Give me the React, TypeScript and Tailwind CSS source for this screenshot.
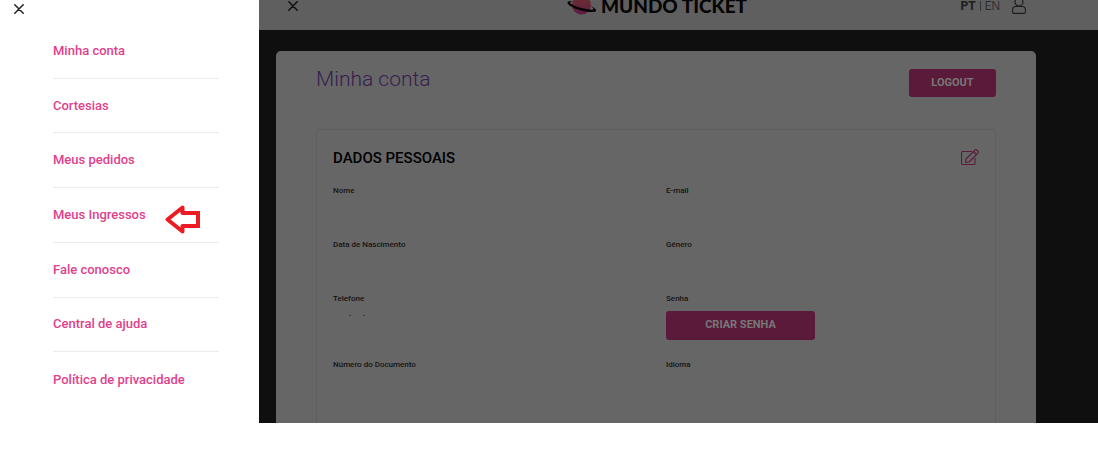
import type { ReactNode } from 'react'

const MENU = [
  { label: 'Minha conta', href: '#conta' },
  { label: 'Cortesias', href: '#cortesias' },
  { label: 'Meus pedidos', href: '#pedidos' },
  { label: 'Meus Ingressos', href: '#ingressos', marked: true },
  { label: 'Fale conosco', href: '#contato' },
  { label: 'Central de ajuda', href: '#ajuda' },
  { label: 'Política de privacidade', href: '#privacidade' },
]

function CloseIcon() {
  return (
    <svg className="block w-[10px] h-[10px]" viewBox="0 0 10 10" fill="none" stroke="currentColor" strokeWidth="1.5" strokeLinecap="round">
      <path d="M.8.8l8.4 8.4M9.2.8L.8 9.2" />
    </svg>
  )
}

function ArrowMark() {
  return (
    <svg className="absolute top-4 right-[18px] w-9 h-[31px]" viewBox="0 0 36 31" fill="none" stroke="#ed1c24" strokeWidth="4" strokeLinejoin="round">
      <path d="M2.500 15.500L17.500 3.500V9H33V22H17.500V27.500Z" />
      <path d="M32 7h3v3zM32 24h3v-3z" fill="#ed1c24" stroke="none" />
    </svg>
  )
}

function Planet() {
  return (
    <svg className="block w-[30px] h-[22px] shrink-0" viewBox="0 0 30 22">
      <defs>
        <linearGradient id="planet" x1="0" y1="0" x2="0" y2="1">
          <stop offset="0" stopColor="#6b3028" />
          <stop offset="0.5" stopColor="#66273a" />
          <stop offset="1" stopColor="#5b1a42" />
        </linearGradient>
      </defs>
      <circle cx="14.5" cy="10" r="9.5" fill="url(#planet)" />
      <path d="M6 6C1.500 5.500-.5 7 1 9c2.500 3 10 6.200 18 7.500 7 1.100 11.500.5 9.800-2-.8-1.200-2.800-2.400-5.300-3.500 1.800 1.300 3 2.300 2.800 3-.4 1.200-4.500.8-9.300-.4C9.500 11.900 3.500 9.300 3.200 7.700 3 6.800 4.500 6.400 6 6z" fill="#050505" />
    </svg>
  )
}

function UserIcon() {
  return (
    <svg className="block w-[14px] h-[18px]" viewBox="0 0 14 18" fill="none" stroke="currentColor" strokeWidth="1.1">
      <circle cx="7" cy="5" r="4" />
      <path d="M3.600 9.500h6.800c1.700 0 3 1.300 3 3v2.500c0 .8-.6 1.400-1.400 1.400H2c-.8 0-1.400-.6-1.400-1.400v-2.500c0-1.700 1.300-3 3-3z" />
    </svg>
  )
}

function EditIcon() {
  return (
    <svg className="block w-[18px] h-[18px]" viewBox="0 0 18 18" fill="none" stroke="currentColor" strokeWidth="1.1" strokeLinejoin="round">
      <path d="M11 2.500H1.500c-.6 0-1 .4-1 1v11c0 .6.400 1 1 1h11.500c.6 0 1-.4 1-1V9" />
      <path d="M4.500 13.500l.5-3.500 8.700-8.700c.7-.7 1.700-.7 2.400 0l.6.6c.7.7.7 1.700 0 2.400L8 13z" />
      <path d="M12.500 2.500l3 3" />
    </svg>
  )
}

function Field({ label, children }: { label: string; children?: ReactNode }) {
  return (
    <div className="pb-[19px]">
      <dt className="text-[8px] leading-[12px] font-medium text-[#141414]">{label}</dt>
      <dd className="mt-[6px] min-h-[17px]">{children}</dd>
    </div>
  )
}

function Sidebar() {
  return (
    <aside className="w-[259px] shrink-0 bg-white pb-4">
      <button type="button" aria-label="Fechar menu" className="block h-6 pl-[14px] pr-2 pb-[6px] text-[#222]">
        <CloseIcon />
      </button>
      <nav aria-label="Menu">
        <ul className="grid auto-rows-fr h-[383px] pl-[53px] pr-10">
          {MENU.map((item) => (
            <li key={item.label} className="relative flex items-center border-b border-[#ebebeb] last:border-b-0">
              <a href={item.href} className="text-[13px] leading-5 font-medium text-[#e0418c] whitespace-nowrap">
                {item.label}
              </a>
              {item.marked && <ArrowMark />}
            </li>
          ))}
        </ul>
      </nav>
    </aside>
  )
}

function TopBar() {
  return (
    <header className="h-[30px] bg-[#5f5f5f] pl-[29px] pr-[72px]">
      <div className="grid grid-cols-[1fr_auto_1fr] grid-rows-[12px] items-center">
        <button type="button" aria-label="Fechar" className="justify-self-start text-[#111]">
          <CloseIcon />
        </button>
        <div className="flex items-center gap-1 text-[19px] leading-3 font-black text-[#050505] whitespace-nowrap font-['Lato']">
          <Planet />
          MUNDO TICKET
        </div>
        <div className="flex items-center justify-self-end text-[12px] leading-3 text-[#1c1c1c]">
          <button type="button" className="font-bold">PT</button>
          <span className="mx-1 h-[10px] w-px bg-[#333]" />
          <button type="button" className="font-light">EN</button>
          <a href="#conta" aria-label="Minha conta" className="ml-3">
            <UserIcon />
          </a>
        </div>
      </div>
    </header>
  )
}

export default function App() {
  return (
    <div className="min-h-screen bg-white font-['Roboto',sans-serif]">
      <div className="flex overflow-hidden">
        <Sidebar />
        <div className="flex flex-col flex-1 min-w-0 bg-[#0f0f0f]">
          <TopBar />
          <main className="flex-1 pt-[21px] pl-[17px] pr-[62px]">
            <div className="h-full rounded-t-[5px] bg-[#666] px-10 pt-[18px]">
              <div className="flex items-start justify-between">
                <h1 className="text-[21px] leading-5 font-light text-[#36204e]">Minha conta</h1>
                <button type="button" className="h-7 w-[87px] rounded-[3px] bg-[#5b1a39] text-[11px] font-bold text-[#777]">
                  LOGOUT
                </button>
              </div>

              <section className="mt-8 rounded-t-[4px] border border-b-0 border-[#5e5e5e] px-4 pt-[18px] pb-[9px]">
                <div className="flex items-center justify-between h-5">
                  <h2 className="text-[15px] leading-5 font-medium text-black">DADOS PESSOAIS</h2>
                  <button type="button" aria-label="Editar dados" className="text-[#5b1a39]">
                    <EditIcon />
                  </button>
                </div>

                <dl className="mt-[17px] grid grid-cols-2 gap-x-5">
                  <Field label="Nome" />
                  <Field label="E-mail" />
                  <Field label="Data de Nascimento" />
                  <Field label="Gênero" />
                  <Field label="Telefone">
                    {/* masked number */}
                    <div className="flex gap-3 pt-1 pl-4">
                      <span className="h-px w-[2px] bg-[#3a3a3a]" />
                      <span className="h-px w-[2px] bg-[#3a3a3a]" />
                    </div>
                  </Field>
                  <Field label="Senha">
                    <button type="button" className="block h-[29px] w-[149px] rounded-[3px] bg-[#5b1a39] text-[11px] font-bold text-[#777]">
                      CRIAR SENHA
                    </button>
                  </Field>
                  <Field label="Número do Documento" />
                  <Field label="Idioma" />
                </dl>
              </section>
            </div>
          </main>
        </div>
      </div>
    </div>
  )
}
